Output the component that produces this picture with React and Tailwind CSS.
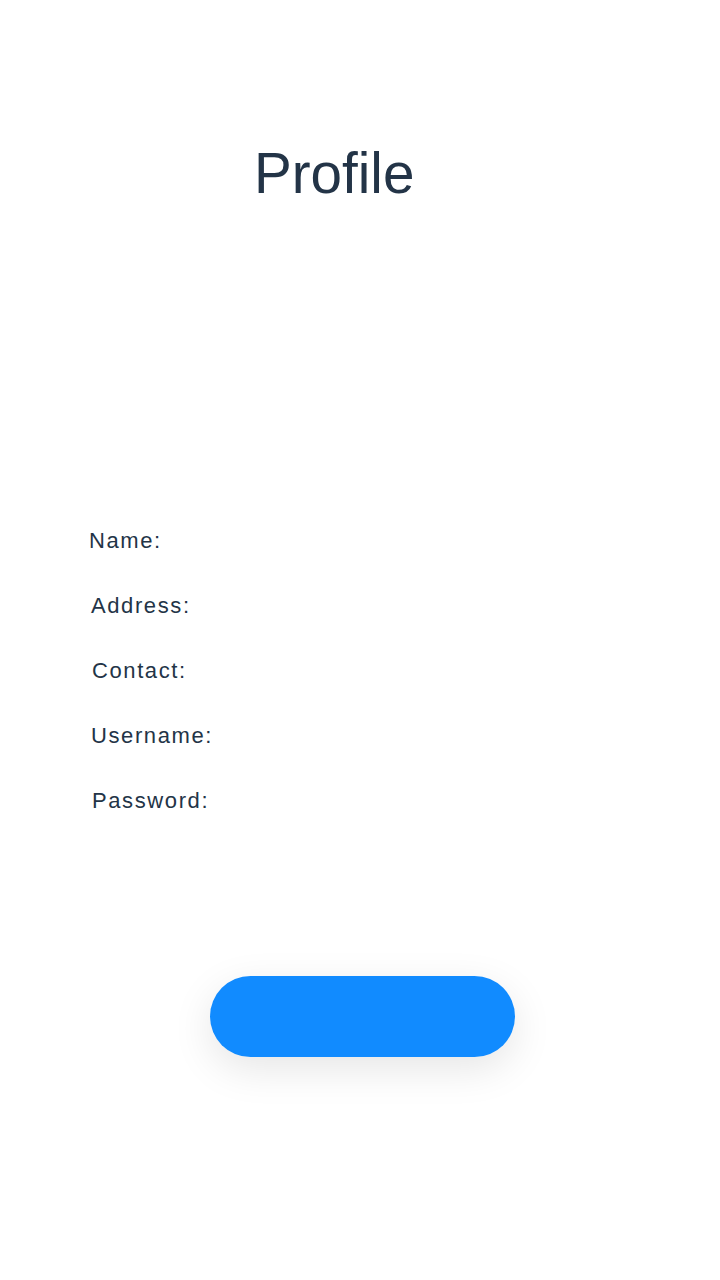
import React from 'react';

const fields = [
  { label: 'Name:', cls: 'ml-[89px]' },
  { label: 'Address:', cls: 'ml-[91px]' },
  { label: 'Contact:', cls: 'ml-[92px]' },
  { label: 'Username:', cls: 'ml-[91px]' },
  { label: 'Password:', cls: 'ml-[92px]' },
];

const App = () => {
  return (
    <div className="w-[720px] h-[1280px] bg-white font-['Liberation_Sans',Arial,sans-serif] text-[#233447] flex flex-col">
      <h1 className="mt-[146px] ml-[254px] text-[56.6px] leading-none font-normal">Profile</h1>

      <div className="mt-[323px] flex flex-col gap-[35px]">
        {fields.map((f) => (
          <div key={f.label} className={`${f.cls} h-[30px] text-[22px] leading-[30px] tracking-[1.6px]`}>
            {f.label}
          </div>
        ))}
      </div>

      <button
        type="button"
        className="mt-[160px] ml-[210px] w-[305px] h-[81px] rounded-full bg-[#118bff] shadow-[0_12px_40px_rgba(0,0,0,0.1)]"
      />
    </div>
  );
};

export default App;
